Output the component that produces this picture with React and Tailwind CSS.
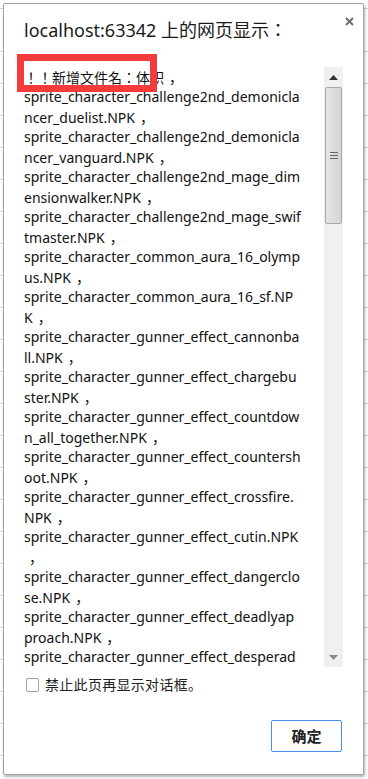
import { useState } from "react"

const lines = [
  "！！新增文件名：体积，",
  "sprite_character_challenge2nd_demonicla",
  "ncer_duelist.NPK，",
  "sprite_character_challenge2nd_demonicla",
  "ncer_vanguard.NPK，",
  "sprite_character_challenge2nd_mage_dim",
  "ensionwalker.NPK，",
  "sprite_character_challenge2nd_mage_swif",
  "tmaster.NPK，",
  "sprite_character_common_aura_16_olymp",
  "us.NPK，",
  "sprite_character_common_aura_16_sf.NP",
  "K，",
  "sprite_character_gunner_effect_cannonba",
  "ll.NPK，",
  "sprite_character_gunner_effect_chargebu",
  "ster.NPK，",
  "sprite_character_gunner_effect_countdow",
  "n_all_together.NPK，",
  "sprite_character_gunner_effect_countersh",
  "oot.NPK，",
  "sprite_character_gunner_effect_crossfire.",
  "NPK，",
  "sprite_character_gunner_effect_cutin.NPK",
  "，",
  "sprite_character_gunner_effect_dangerclo",
  "se.NPK，",
  "sprite_character_gunner_effect_deadlyap",
  "proach.NPK，",
  "sprite_character_gunner_effect_desperad",
]

// full-width comma sits on the baseline a little right of the word, like the YaHei rendering
function Line({ text }) {
  const parts = text.split("，")
  return (
    <div className="whitespace-nowrap h-[20px]">
      {parts.map((p, i) => (
        <span key={i}>
          {p}
          {i < parts.length - 1 && (
            <span className="inline-block pl-[5px]" style={{ fontFamily: '"Noto Sans CJK SC", sans-serif' }}>，</span>
          )}
        </span>
      ))}
    </div>
  )
}

function Scrollbar() {
  return (
    <div className="flex flex-col w-[19px] h-full bg-[#f0f0f0]">
      <div className="h-[20px] flex items-center justify-center">
        <svg width="9" height="5" viewBox="0 0 9 5"><path d="M0 5 L4.5 0 L9 5 Z" fill="#333" /></svg>
      </div>
      <div className="h-[137px] mx-[1px] rounded-[2px] border border-[#a9a9a9] bg-[linear-gradient(to_right,#e4e4e4,#d4d4d4)] flex items-center justify-center">
        <div className="flex flex-col gap-[2px]">
          <div className="w-[8px] h-[1px] bg-[#666]" />
          <div className="w-[8px] h-[1px] bg-[#666]" />
          <div className="w-[8px] h-[1px] bg-[#666]" />
        </div>
      </div>
      <div className="flex-1" />
      <div className="h-[20px] flex items-center justify-center">
        <svg width="9" height="5" viewBox="0 0 9 5"><path d="M0 0 L4.5 5 L9 0 Z" fill="#8a8a8a" /></svg>
      </div>
    </div>
  )
}

export default function App() {
  const [checked, setChecked] = useState(false)

  return (
    <div className="relative w-[368px] h-[779px] overflow-hidden bg-white bg-[repeating-linear-gradient(to_bottom,transparent_0,transparent_31px,#d6d6d6_31px,#d6d6d6_32px)] bg-[position:0_20px] pt-[3px] pl-[3px]" style={{ fontFamily: '"Noto Sans", "Noto Sans CJK TC", sans-serif' }}>
      <div className="relative w-[361px] h-[772px] bg-white border border-[#a3a3a3] rounded-[2px] shadow-[1px_2px_3px_rgba(0,0,0,0.3)] flex flex-col pl-[20px] pr-[20px]">
        <div className="pt-[16px] text-[18px] leading-[20px] text-[#1a1a1a] whitespace-nowrap">localhost:63342 上的网页显示：</div>
        <button className="absolute top-[13px] right-[9px] w-[9px] h-[9px]">
          <svg width="9" height="9" viewBox="0 0 9 9"><path d="M1 1 L8 8 M8 1 L1 8" stroke="#6f6f6f" strokeWidth="2" /></svg>
        </button>

        <div className="mt-[27px] h-[600px] flex">
          <div className="w-[300px] overflow-hidden text-[14px] leading-[20px] text-[#111]">
            {lines.map((l, i) => (
              <Line key={i} text={l} />
            ))}
          </div>
          <Scrollbar />
        </div>

        <label className="mt-[10px] h-[15px] flex items-center gap-[6px] pl-[2px] cursor-pointer">
          <span onClick={() => setChecked(!checked)} className="w-[13px] h-[14px] rounded-[2px] border border-[#a0a0a0] bg-white" />
          <span className="text-[14px] leading-[15px] text-[#222] tracking-[0.3px]" style={{ fontFamily: '"Noto Sans CJK SC", sans-serif' }}>禁止此页再显示对话框。</span>
        </label>

        <div className="mt-[28px] flex justify-end pr-[1px]">
          <button className="w-[71px] h-[32px] rounded-[2px] border border-[#4d8ff0] bg-white text-[15px] font-bold text-[#222]">确定</button>
        </div>
      </div>

      <div className="absolute left-[17px] top-[54px] w-[140px] h-[38px] border-[7px] border-[#f33b3b]" />
    </div>
  )
}
